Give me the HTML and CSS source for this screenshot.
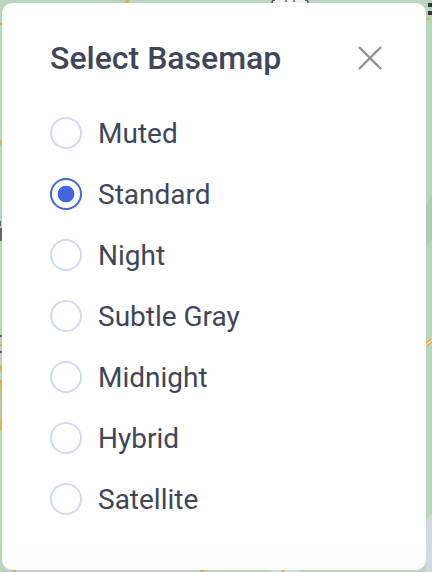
FILE: index.html
```html
<!DOCTYPE html>
<html lang="en">
<head>
<meta charset="utf-8">
<title>Select Basemap</title>
<link rel="stylesheet" href="styles.css">
</head>
<body>
<svg class="map" viewBox="0 0 432 572" aria-hidden="true">
  <path d="M426 205 L432 195 V240 L426 246Z" fill="#a9cfb0"/>
  <path d="M426 520 L432 514 V572 H426Z" fill="#d5d8dc"/>
  <path d="M0 570 H190 L196 572 H0Z" fill="#c9cbc9"/>
  <path d="M270 570 H300 V572 H270Z" fill="#d5d8dc"/>
  <path d="M126 3 L128 0" stroke="#e8ab3a" stroke-width="3" fill="none"/>
  <path d="M426 345 L432 340" stroke="#e5a93c" stroke-width="4" fill="none"/>
  <path d="M426 345 L432 340" stroke="#f8e6b5" stroke-width="1.5" fill="none"/>
  <path d="M0 24 H2 M0 140 L2 146 M0 345 H2 M0 366 L2 372 M1 380 Q3 405 1 430" stroke="#e8ab3a" stroke-width="2" fill="none"/>
  <path d="M0 221 V226 M1 228 V241" stroke="#666" stroke-width="2" fill="none"/>
  <path d="M0 336 H2 M0 352 H2" stroke="#333" stroke-width="1.5" fill="none"/>
  <path d="M272 3 Q272 0 275 0 H305 Q308 0 308 3Z" fill="#f2f2f2"/>
  <path d="M272 3 Q272 0 275 0 M305 0 Q308 0 308 3 M286 0 V2 M294 0 V2" stroke="#555" stroke-width="1.5" fill="none"/>
  <path d="M428 5 H432 M428 13 H432" stroke="#333" stroke-width="4" fill="none"/>
  <path d="M426 19 H429" stroke="#e8ab3a" stroke-width="1.5" fill="none"/>
  <path d="M14 572 V570 M201 572 L204 570 M283 572 V570" stroke="#e0a93c" stroke-width="3" fill="none"/>
</svg>
<main class="modal">
  <header class="modal-header">
    <h1 class="modal-title">Select Basemap</h1>
    <button class="close" type="button" aria-label="Close">
      <svg class="close-icon" viewBox="0 0 24 24"><path d="M1 1 L23 23 M23 1 L1 23"/></svg>
    </button>
  </header>
  <div class="options">
    <label class="option"><span class="radio"></span><span class="label">Muted</span></label>
    <label class="option"><span class="radio radio-on"></span><span class="label">Standard</span></label>
    <label class="option"><span class="radio"></span><span class="label">Night</span></label>
    <label class="option"><span class="radio"></span><span class="label">Subtle Gray</span></label>
    <label class="option"><span class="radio"></span><span class="label">Midnight</span></label>
    <label class="option"><span class="radio"></span><span class="label">Hybrid</span></label>
    <label class="option"><span class="radio"></span><span class="label">Satellite</span></label>
  </div>
</main>
</body>
</html>
```
FILE: styles.css
```css
* { box-sizing: border-box; }
html, body { margin: 0; height: 572px; overflow: hidden; }
body {
  background: #b8d6bd;
  font-family: Roboto, "Liberation Sans", sans-serif;
  color: #3f4659;
  position: relative;
}
.map { position: absolute; inset: 0; width: 432px; height: 572px; }
.modal {
  position: relative;
  width: 424px;
  height: 567px;
  margin: 3px 0 0 2px;
  padding: 35px 44px 0 48px;
  background: linear-gradient(to bottom, #fff 0, #fff 95%, #fafafa 100%);
  border-radius: 10px;
}
.modal-header {
  display: flex;
  align-items: center;
  justify-content: space-between;
  height: 40px;
}
.modal-title { margin: 0; font-size: 32px; font-weight: 500; line-height: 40px; }
.close { border: 0; background: none; padding: 0; display: flex; }
.close-icon { width: 24px; height: 24px; fill: none; stroke: #909090; stroke-width: 2.4; }
.options {
  display: flex;
  flex-direction: column;
  gap: 25px;
  margin-top: 37px;
}
.option { display: flex; align-items: center; gap: 16px; height: 36px; }
.radio {
  width: 32px;
  height: 32px;
  border-radius: 50%;
  border: 2px solid #cfdaf5;
  background: #fff;
  flex: none;
}
.radio-on {
  border-color: #3f66dc;
  background: radial-gradient(circle, #3f66dc 0, #3f66dc 8px, #fff 8.7px);
}
.label { font-size: 28px; line-height: 36px; padding-top: 2px; }
```
